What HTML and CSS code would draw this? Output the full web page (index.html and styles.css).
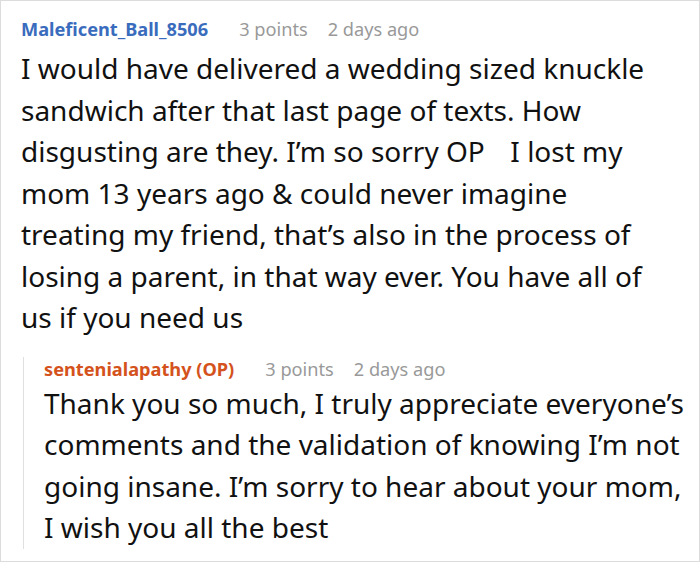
FILE: index.html
```html
<!DOCTYPE html>
<html>
<head>
<meta charset="utf-8">
<link rel="stylesheet" href="styles.css">
</head>
<body>
<div class="comment">
  <div class="meta">
    <span class="author">Maleficent_Ball_8506</span>
    <span class="points">3 points</span>
    <span class="time">2 days ago</span>
  </div>
  <p class="text">I would have delivered a wedding sized knuckle<br>sandwich after that last page of texts. How<br>disgusting are they. I’m so sorry OP <span class="emoji"></span> I lost my<br>mom 13 years ago &amp; could never imagine<br>treating my friend, that’s also in the process of<br>losing a parent, in that way ever. You have all of<br>us if you need us</p>
  <div class="reply">
    <div class="meta reply-meta">
      <span class="author op">sentenialapathy (OP)</span>
      <span class="points">3 points</span>
      <span class="time">2 days ago</span>
    </div>
    <p class="text reply-text">Thank you so much, I truly appreciate everyone’s<br>comments and the validation of knowing I’m not<br>going insane. I’m sorry to hear about your mom,<br>I wish you all the best</p>
  </div>
</div>
</body>
</html>
```

FILE: styles.css
```css
html, body {
  margin: 0;
  padding: 0;
  background: #fff;
}
body {
  font-family: "Noto Sans", "Open Sans", sans-serif;
  color: #111;
}
.comment {
  box-sizing: border-box;
  width: 700px;
  height: 562px;
  border: 1px solid #dcdcdc;
  padding: 16px 4px 0 20px;
  overflow: hidden;
}
.meta {
  display: flex;
  align-items: baseline;
  font-size: 18.2px;
  line-height: 24px;
  white-space: nowrap;
}
.author {
  font-weight: bold;
  color: #3a6cbd;
}
.author.op {
  color: #d4521c;
}
.points {
  color: #999;
  margin-left: 31px;
}
.time {
  color: #999;
  margin-left: 20px;
}
.text {
  margin: 7px 0 0;
  font-size: 28px;
  line-height: 41.5px;
  white-space: nowrap;
}
.emoji {
  display: inline-block;
  width: 11px;
}
.reply {
  margin: 31px 0 0 2px;
  border-left: 1px solid #e0e0e0;
  padding-left: 20px;
}
.reply-meta {
  margin-top: -13px;
}
.reply-text {
  margin-top: 2px;
  margin-bottom: -8px;
}
```
